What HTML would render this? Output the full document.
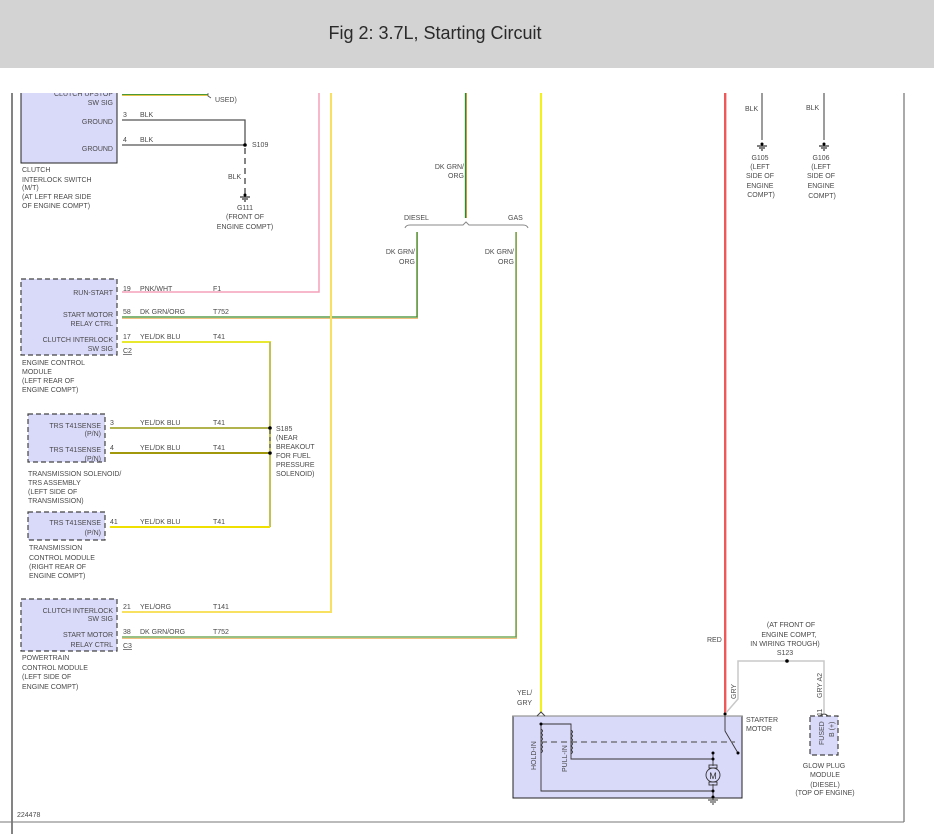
<!DOCTYPE html>
<html><head><meta charset="utf-8"><style>
html,body{margin:0;padding:0;background:#fff;}
svg{display:block;}
text{font-family:"Liberation Sans",sans-serif;font-size:7px;fill:#4a4a4a;}
.r{text-anchor:end;}
.c{text-anchor:middle;}
</style></head><body>
<svg width="934" height="834" viewBox="0 0 934 834" xmlns="http://www.w3.org/2000/svg">

<!-- frame -->
<line x1="12" y1="93" x2="12" y2="834" stroke="#333" stroke-width="1.2"/>
<line x1="904" y1="93" x2="904" y2="822" stroke="#555" stroke-width="1"/>
<line x1="0" y1="822" x2="904" y2="822" stroke="#777" stroke-width="1"/>

<!-- clutch switch box -->
<rect x="21" y="80" width="96" height="83" fill="#d9d9fa" stroke="#222" stroke-width="1"/>
<text x="113" y="96" class="r">CLUTCH UPSTOP</text>
<text x="113" y="105" class="r">SW SIG</text>
<text x="113" y="124" class="r">GROUND</text>
<text x="113" y="151" class="r">GROUND</text>
<line x1="122" y1="95" x2="208" y2="95" stroke="#e8c34a" stroke-width="2"/>
<line x1="122" y1="94.5" x2="208" y2="94.5" stroke="#4a9a3a" stroke-width="1"/>
<path d="M208,92 L208,96 L211,98" fill="none" stroke="#555" stroke-width="0.8"/>
<text x="215" y="102">USED)</text>
<text x="123" y="117">3</text><text x="140" y="117">BLK</text>
<text x="123" y="142">4</text><text x="140" y="142">BLK</text>
<polyline points="122,120 245,120 245,146" fill="none" stroke="#555" stroke-width="1.3"/>
<line x1="122" y1="145" x2="245" y2="145" stroke="#555" stroke-width="1.3"/>
<circle cx="245" cy="145" r="1.8" fill="#000"/>
<text x="252" y="147">S109</text>
<line x1="245" y1="148" x2="245" y2="195" stroke="#333" stroke-width="1.2" stroke-dasharray="6,4"/>
<text x="228" y="179">BLK</text>
<circle cx="245" cy="195" r="1.5" fill="#000"/>
<line x1="240" y1="197" x2="250" y2="197" stroke="#000"/><line x1="242" y1="199" x2="248" y2="199" stroke="#000"/><line x1="244" y1="201" x2="246" y2="201" stroke="#000"/>
<text x="245" y="210" class="c">G111</text>
<text x="245" y="219" class="c">(FRONT OF</text>
<text x="245" y="229" class="c">ENGINE COMPT)</text>
<text x="22" y="172">CLUTCH</text>
<text x="22" y="182">INTERLOCK SWITCH</text>
<text x="22" y="190">(M/T)</text>
<text x="22" y="199">(AT LEFT REAR SIDE</text>
<text x="22" y="208">OF ENGINE COMPT)</text>

<!-- pink -->
<polyline points="319,93 319,292 122,292" fill="none" stroke="#f4a0b8" stroke-width="1.5"/>
<!-- ECM box -->
<rect x="21" y="279" width="96" height="76" fill="#d9d9fa" stroke="#444" stroke-width="1.2" stroke-dasharray="5,3"/>
<text x="113" y="295" class="r">RUN-START</text>
<text x="113" y="317" class="r">START MOTOR</text>
<text x="113" y="326" class="r">RELAY CTRL</text>
<text x="113" y="342" class="r">CLUTCH INTERLOCK</text>
<text x="113" y="351" class="r">SW SIG</text>
<text x="123" y="291">19</text><text x="140" y="291">PNK/WHT</text><text x="213" y="291">F1</text>
<text x="123" y="314">58</text><text x="140" y="314">DK GRN/ORG</text><text x="213" y="314">T752</text>
<text x="123" y="339">17</text><text x="140" y="339">YEL/DK BLU</text><text x="213" y="339">T41</text>
<text x="123" y="353" style="text-decoration:underline">C2</text>
<polyline points="122,318.5 417.5,318.5 417.5,232" fill="none" stroke="#f0c080" stroke-width="1"/>
<polyline points="122,317 417,317 417,232" fill="none" stroke="#3a8a2a" stroke-width="1.3"/>
<polyline points="122,342 270,342 270,527" fill="none" stroke="#e8e830" stroke-width="2"/>
<line x1="270" y1="342" x2="270" y2="527" stroke="#888" stroke-width="0.8"/>
<text x="22" y="365">ENGINE CONTROL</text>
<text x="22" y="374">MODULE</text>
<text x="22" y="383">(LEFT REAR OF</text>
<text x="22" y="392">ENGINE COMPT)</text>

<!-- TRS box -->
<rect x="28" y="414" width="77" height="48" fill="#d9d9fa" stroke="#444" stroke-width="1.2" stroke-dasharray="5,3"/>
<text x="101" y="428" class="r">TRS T41SENSE</text>
<text x="101" y="436" class="r">(P/N)</text>
<text x="101" y="452" class="r">TRS T41SENSE</text>
<text x="101" y="461" class="r">(P/N)</text>
<text x="110" y="425">3</text><text x="140" y="425">YEL/DK BLU</text><text x="213" y="425">T41</text>
<text x="110" y="450">4</text><text x="140" y="450">YEL/DK BLU</text><text x="213" y="450">T41</text>
<line x1="110" y1="428" x2="270" y2="428" stroke="#d8d860" stroke-width="2"/>
<line x1="110" y1="428" x2="270" y2="428" stroke="#707a30" stroke-width="0.8"/>
<line x1="110" y1="453" x2="270" y2="453" stroke="#f0e000" stroke-width="2"/>
<line x1="110" y1="453" x2="270" y2="453" stroke="#222" stroke-width="0.7"/>
<circle cx="270" cy="428" r="1.8" fill="#000"/><circle cx="270" cy="453" r="1.8" fill="#000"/>
<line x1="270" y1="430" x2="270" y2="452" stroke="#555" stroke-width="1.3" stroke-dasharray="4,3"/>
<text x="276" y="431">S185</text>
<text x="276" y="440">(NEAR</text>
<text x="276" y="449">BREAKOUT</text>
<text x="276" y="458">FOR FUEL</text>
<text x="276" y="467">PRESSURE</text>
<text x="276" y="476">SOLENOID)</text>
<text x="28" y="476">TRANSMISSION SOLENOID/</text>
<text x="28" y="485">TRS ASSEMBLY</text>
<text x="28" y="494">(LEFT SIDE OF</text>
<text x="28" y="503">TRANSMISSION)</text>

<!-- TCM box -->
<rect x="28" y="512" width="77" height="28" fill="#d9d9fa" stroke="#444" stroke-width="1.2" stroke-dasharray="5,3"/>
<text x="101" y="525" class="r">TRS T41SENSE</text>
<text x="101" y="535" class="r">(P/N)</text>
<text x="110" y="524">41</text><text x="140" y="524">YEL/DK BLU</text><text x="213" y="524">T41</text>
<line x1="110" y1="527" x2="270" y2="527" stroke="#f0e000" stroke-width="2"/>
<text x="29" y="550">TRANSMISSION</text>
<text x="29" y="560">CONTROL MODULE</text>
<text x="29" y="569">(RIGHT REAR OF</text>
<text x="29" y="578">ENGINE COMPT)</text>

<!-- yellow/org -->
<polyline points="331,93 331,612 122,612" fill="none" stroke="#f8e060" stroke-width="2"/>
<!-- PCM box -->
<rect x="21" y="599" width="96" height="52" fill="#d9d9fa" stroke="#444" stroke-width="1.2" stroke-dasharray="5,3"/>
<text x="113" y="613" class="r">CLUTCH INTERLOCK</text>
<text x="113" y="621" class="r">SW SIG</text>
<text x="113" y="637" class="r">START MOTOR</text>
<text x="113" y="647" class="r">RELAY CTRL</text>
<text x="123" y="609">21</text><text x="140" y="609">YEL/ORG</text><text x="213" y="609">T141</text>
<text x="123" y="634">38</text><text x="140" y="634">DK GRN/ORG</text><text x="213" y="634">T752</text>
<text x="123" y="648" style="text-decoration:underline">C3</text>
<polyline points="122,638.5 516.5,638.5 516.5,232" fill="none" stroke="#f0c080" stroke-width="1"/>
<polyline points="122,637 516,637 516,232" fill="none" stroke="#5a9a3a" stroke-width="1.3"/>
<text x="22" y="660">POWERTRAIN</text>
<text x="22" y="670">CONTROL MODULE</text>
<text x="22" y="679">(LEFT SIDE OF</text>
<text x="22" y="689">ENGINE COMPT)</text>

<!-- green top & brace -->
<line x1="466.5" y1="93" x2="466.5" y2="218" stroke="#e0a040" stroke-width="1"/>
<line x1="465.5" y1="93" x2="465.5" y2="218" stroke="#2a8a2a" stroke-width="1.3"/>
<text x="464" y="169" class="r">DK GRN/</text>
<text x="464" y="178" class="r">ORG</text>
<path d="M405,228 Q406,225 410,225 L463,225 L466,222 L469,225 L523,225 Q527,225 528,228" fill="none" stroke="#888" stroke-width="1"/>
<text x="404" y="220">DIESEL</text>
<text x="508" y="220">GAS</text>
<text x="415" y="254" class="r">DK GRN/</text>
<text x="415" y="264" class="r">ORG</text>
<text x="514" y="254" class="r">DK GRN/</text>
<text x="514" y="264" class="r">ORG</text>

<!-- yellow YEL/GRY -->
<line x1="541" y1="93" x2="541" y2="712" stroke="#f0f000" stroke-width="1.8"/>
<text x="517" y="695">YEL/</text><text x="517" y="705">GRY</text>
<!-- red -->
<line x1="725" y1="93" x2="725" y2="715" stroke="#e82020" stroke-width="1.5"/>
<line x1="726.5" y1="93" x2="726.5" y2="715" stroke="#f5b0b0" stroke-width="0.8"/>
<text x="707" y="642">RED</text>

<!-- grounds -->
<line x1="762" y1="93" x2="762" y2="140" stroke="#666" stroke-width="1.3"/>
<line x1="824" y1="93" x2="824" y2="140" stroke="#666" stroke-width="1.3"/>
<text x="745" y="111">BLK</text><text x="806" y="110">BLK</text>
<g stroke="#000">
<line x1="757" y1="146" x2="767" y2="146"/><line x1="759" y1="148" x2="765" y2="148"/><line x1="761" y1="150" x2="763" y2="150"/>
<line x1="819" y1="146" x2="829" y2="146"/><line x1="821" y1="148" x2="827" y2="148"/><line x1="823" y1="150" x2="825" y2="150"/>
</g>
<circle cx="762" cy="144" r="1.5"/><circle cx="824" cy="144" r="1.5"/>
<text x="760" y="160" class="c">G105</text><text x="760" y="169" class="c">(LEFT</text><text x="760" y="178" class="c">SIDE OF</text><text x="760" y="188" class="c">ENGINE</text><text x="761" y="197" class="c">COMPT)</text>
<text x="821" y="160" class="c">G106</text><text x="821" y="169" class="c">(LEFT</text><text x="821" y="178" class="c">SIDE OF</text><text x="821" y="188" class="c">ENGINE</text><text x="822" y="198" class="c">COMPT)</text>

<!-- GRY wire -->
<polyline points="725,714 738,699 738,661 824,661 824,713" fill="none" stroke="#c8c8c8" stroke-width="1.5"/>
<circle cx="787" cy="661" r="1.8" fill="#000"/>
<text x="791" y="627" class="c">(AT FRONT OF</text>
<text x="789" y="637" class="c">ENGINE COMPT,</text>
<text x="785" y="646" class="c">IN WIRING TROUGH)</text>
<text x="785" y="655" class="c">S123</text>
<text transform="translate(736,699) rotate(-90)">GRY</text>
<text transform="translate(822,698) rotate(-90)">GRY A2</text>
<text transform="translate(822,716) rotate(-90)">11</text>

<!-- starter box -->
<rect x="513" y="716" width="229" height="82" fill="#d9d9fa" stroke="#222" stroke-width="1"/>
<line x1="513" y1="716" x2="742" y2="716" stroke="#999" stroke-width="1.2"/>
<text x="746" y="722">STARTER</text>
<text x="746" y="731">MOTOR</text>
<path d="M537,716 L541,712 L545,716" fill="none" stroke="#444"/>
<g fill="none" stroke="#333" stroke-width="0.9">
<polyline points="541,724 541,791 713,791"/>
<polyline points="541,724 571,724 571,759 713,759"/>
<path d="M541,729 q3,2 0,4 q3,2 0,4 q3,2 0,4 q3,2 0,4 q3,2 0,4 q3,2 0,4"/>
<path d="M571,730 q3,2 0,4 q3,2 0,4 q3,2 0,4 q3,2 0,4 q3,2 0,4 q3,2 0,4"/>
<line x1="713" y1="753" x2="713" y2="766"/>
<line x1="713" y1="784" x2="713" y2="800"/>
<circle cx="713" cy="775" r="7"/>
<rect x="709" y="765" width="8" height="3"/><rect x="709" y="782" width="8" height="3"/>
<polyline points="725,716 725,731 735,748 738,753"/>
</g>
<line x1="541" y1="742" x2="735" y2="742" stroke="#666" stroke-width="1.3" stroke-dasharray="6,4"/>
<circle cx="541" cy="724" r="1.5"/><circle cx="713" cy="753" r="1.5"/><circle cx="713" cy="759" r="1.5"/>
<circle cx="713" cy="791" r="1.5"/><circle cx="713" cy="797" r="1.5"/><circle cx="738" cy="753" r="1.5"/><circle cx="725" cy="714" r="1.5"/>
<text x="713" y="779" class="c" style="font-size:9px;fill:#333">M</text>
<g stroke="#333"><line x1="708" y1="800" x2="718" y2="800"/><line x1="710" y1="802" x2="716" y2="802"/><line x1="712" y1="804" x2="714" y2="804"/></g>
<text transform="translate(536,770) rotate(-90)">HOLD-IN</text>
<text transform="translate(567,772) rotate(-90)">PULL-IN</text>

<!-- glow plug -->
<rect x="810" y="716" width="28" height="39" fill="#d9d9fa" stroke="#444" stroke-width="1.2" stroke-dasharray="5,3"/>
<path d="M820,716 q4,-4 8,0" fill="none" stroke="#444"/>
<text transform="translate(824,745) rotate(-90)">FUSED</text>
<text transform="translate(834,737) rotate(-90)">B (+)</text>
<text x="824" y="768" class="c">GLOW PLUG</text>
<text x="825" y="777" class="c">MODULE</text>
<text x="825" y="787" class="c">(DIESEL)</text>
<text x="825" y="795" class="c">(TOP OF ENGINE)</text>

<text x="17" y="817">224478</text>

<!-- clip top -->
<rect x="0" y="68" width="934" height="25" fill="#fff"/>
<rect x="0" y="0" width="934" height="68" fill="#d3d3d3"/>
<text x="435" y="39" class="c" style="font-size:18px;fill:#2a2a2a">Fig 2: 3.7L, Starting Circuit</text>
</svg>
</body></html>
